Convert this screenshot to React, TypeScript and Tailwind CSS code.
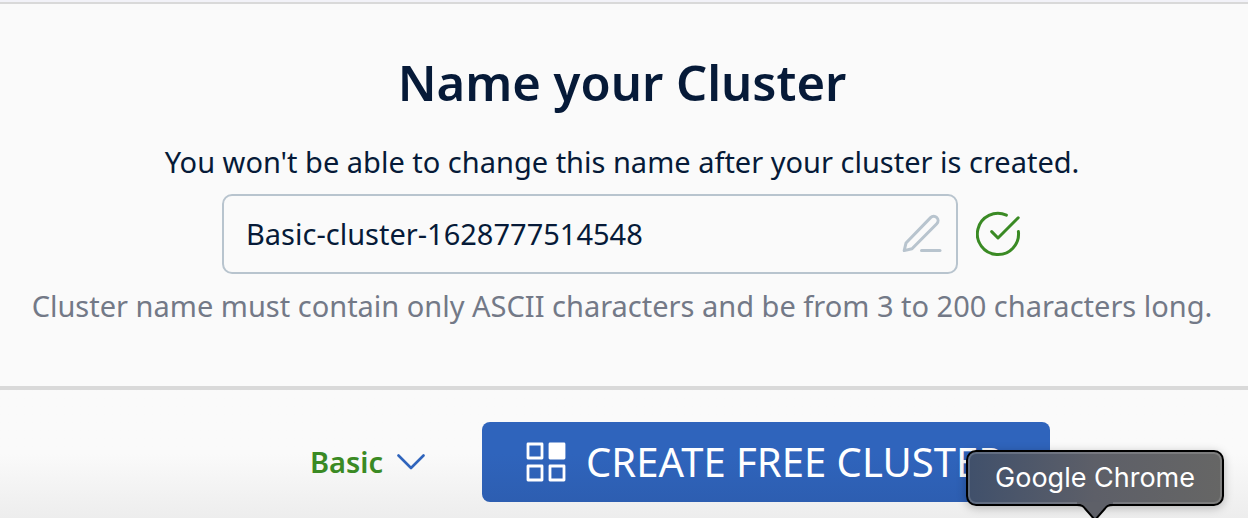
import React, { useState } from "react";

function PencilIcon() {
  return (
    <svg viewBox="0 0 40 40" className="h-10 w-10 shrink-0" fill="none" stroke="#b8c4ce" strokeWidth="3" strokeLinecap="round" strokeLinejoin="round" aria-hidden="true">
      <path d="M2.200 36.600 4 29 28.600 3.600a4.300 4.300 0 0 1 6.200 6.100L10 34.800Z" />
      <path d="M19.500 36.400h18.500" />
    </svg>
  );
}

function CheckIcon() {
  return (
    <svg viewBox="0 0 46 46" className="h-[46px] w-[46px] shrink-0" fill="none" stroke="#3a8a24" strokeWidth="3" strokeLinecap="round" strokeLinejoin="round" role="img" aria-label="Name is valid">
      <path d="M30.400 4.200A20.600 20.600 0 1 0 42.400 20.600" />
      <path d="M15.700 20.600 22 27 42.200 6.800" />
    </svg>
  );
}

function GridIcon() {
  return (
    <svg viewBox="0 0 40 40" className="h-10 w-10 shrink-0" fill="none" stroke="#fff" strokeWidth="2.800" strokeLinejoin="round" aria-hidden="true">
      <rect x="2" y="2" width="14" height="14" />
      <rect x="24" y="2" width="14" height="14" fill="#fff" />
      <rect x="2" y="24" width="14" height="14" />
      <rect x="24" y="24" width="14" height="14" />
    </svg>
  );
}

function Tooltip() {
  return (
    <div role="tooltip" className="absolute right-6 bottom-3 rounded-[10px] border-2 border-black bg-linear-to-r from-[#40506b] via-[#5d5f68] to-[#666665] px-[27px] shadow-[inset_0_0_0_2px_rgba(255,255,255,0.16),0_2px_10px_rgba(0,0,0,0.25)]">
      <span className="block font-['Inter',sans-serif] text-[27px] leading-[52px] whitespace-nowrap text-white">
        Google Chrome
      </span>
      <svg viewBox="0 0 36 20" className="absolute top-[50px] left-1/2 h-5 w-9 -translate-x-1/2" aria-hidden="true">
        <path d="M0 0H36V2C31 2 30 4 28 6L18 18 8 6C6 4 5 2 0 2Z" fill="#5e6068" />
        <path d="M0 3C5 3 6 4 8 6.500L18 18 28 6.500C30 4 31 3 36 3" fill="none" stroke="#000" strokeWidth="2" />
      </svg>
    </div>
  );
}

export default function App() {
  const [name, setName] = useState("Basic-cluster-1628777514548");

  return (
    <div className="flex min-h-screen flex-col bg-[#fafafa] font-['Noto_Sans',sans-serif] text-[29px] leading-[40px] text-[#061a38]">
      <div className="h-1 border-b-2 border-[#d9d9d9] bg-[#f2f2f8]" />

      <main className="flex flex-col items-center pt-[46px] pr-1 pb-[60px] text-center">
        <h1 className="text-[49px] leading-[64px] font-semibold">Name your Cluster</h1>
        <label htmlFor="cluster-name" className="mt-7">
          You won't be able to change this name after your cluster is created.
        </label>
        <div className="mt-3 flex w-full max-w-[800px] items-center gap-[18px]">
          <div className="flex h-20 min-w-0 flex-1 items-center rounded-[10px] border-2 border-[#b8c4ce] pr-3.5 pl-[22px] focus-within:border-[#2f64bc]">
            <input
              id="cluster-name"
              type="text"
              value={name}
              maxLength={200}
              aria-describedby="cluster-name-hint"
              onChange={(e) => setName(e.target.value)}
              className="min-w-0 flex-1 bg-transparent outline-none"
            />
            <PencilIcon />
          </div>
          <CheckIcon />
        </div>
        <p id="cluster-name-hint" className="mt-3 text-[#737987]">
          Cluster name must contain only ASCII characters and be from 3 to 200 characters long.
        </p>
      </main>

      <footer className="relative flex flex-1 items-start justify-center overflow-hidden border-t-4 border-[#d9d9d9] bg-linear-to-b from-[#fafafa] from-50% to-[#ededed] pt-8 pb-4 pl-28">
        <button type="button" className="flex h-20 items-center gap-3.5 font-semibold text-[#3a8a24]">
          Basic
          <svg viewBox="0 0 28 16" className="h-4 w-7" fill="none" stroke="#2f64bc" strokeWidth="2.600" strokeLinecap="round" strokeLinejoin="round" aria-hidden="true">
            <path d="M1.500 1.500 14 14 26.500 1.500" />
          </svg>
        </button>
        <button type="button" className="ml-[57px] flex h-20 w-[568px] items-center gap-5 rounded-lg bg-linear-to-b from-[#2f64bc] from-40% to-[#2d5eb1] pl-11 text-[40px] whitespace-nowrap text-white">
          <GridIcon />
          CREATE FREE CLUSTER
        </button>
        <Tooltip />
      </footer>
    </div>
  );
}
